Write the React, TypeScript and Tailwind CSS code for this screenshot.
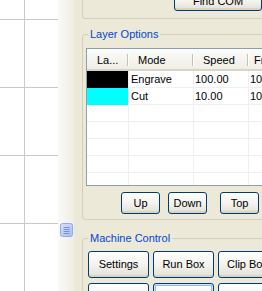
import React from "react";

const btn =
  "flex items-center justify-center shrink-0 border border-[#003c74] rounded-[3px] bg-linear-to-b from-[#ffffff] via-[#f4f3ee] to-[#e3e0d4] text-black text-[11px] leading-none shadow-[inset_0_-2px_0_#d8d3c4,inset_0_1px_0_#ffffff]";

function Row({ sw, mode, speed, f }: { sw?: string; mode?: string; speed?: string; f?: string }) {
  return (
    <div className="grid grid-cols-[42px_65px_55px_1fr] h-[17px] border-b border-[#efefef]">
      <div className="border-r border-[#efefef] pb-0">
        {sw ? <div className={`h-full w-[41px] ${sw}`} /> : null}
      </div>
      <div className="border-r border-[#efefef] pl-[2px] flex items-center">{mode}</div>
      <div className="border-r border-[#efefef] pl-[1px] flex items-center">{speed}</div>
      <div className="pl-[1px] flex items-center">{f}</div>
    </div>
  );
}

function HeadCell({ label, pl, last }: { label: string; pl: string; last?: boolean }) {
  return (
    <div className="flex items-center h-full">
      <div className={`flex-1 ${pl} pt-[2px] whitespace-nowrap overflow-hidden`}>{label}</div>
      {!last && <div className="w-[2px] h-[12px] mt-[2px] border-l border-[#c5c2b2] bg-white shrink-0" />}
    </div>
  );
}

export default function App() {
  return (
    <div className="w-[262px] h-[291px] overflow-hidden flex font-['Liberation_Sans',Arial,sans-serif] text-[11px] text-black">
      {/* canvas */}
      <div className="w-[58px] h-full bg-white shrink-0">
        <svg width="58" height="291" className="block">
          <line x1="24.5" y1="0" x2="24.5" y2="291" stroke="#c9c9c9" strokeWidth="1" />
          <line x1="0" y1="19.5" x2="58" y2="19.5" stroke="#c9c9c9" strokeWidth="1" />
          <line x1="0" y1="87.5" x2="58" y2="87.5" stroke="#c9c9c9" strokeWidth="1" />
          <line x1="0" y1="155.5" x2="58" y2="155.5" stroke="#c9c9c9" strokeWidth="1" />
          <line x1="0" y1="223.5" x2="58" y2="223.5" stroke="#c9c9c9" strokeWidth="1" />
        </svg>
      </div>
      {/* splitter */}
      <div className="w-[16px] h-full shrink-0 bg-linear-to-r from-[#f9f9f6] to-[#efede5] flex flex-col pl-[2px] pt-[223px]">
        <svg width="13" height="14" className="block">
          <defs>
            <linearGradient id="ig" x1="0" y1="0" x2="1" y2="1">
              <stop offset="0" stopColor="#d8e2fd" />
              <stop offset="1" stopColor="#a9bdf0" />
            </linearGradient>
          </defs>
          <rect x="0.5" y="0.5" width="12" height="13" rx="2" fill="url(#ig)" stroke="#93aae6" />
          <line x1="3.5" y1="4.5" x2="9.5" y2="4.5" stroke="#7590dc" />
          <line x1="3.5" y1="6.5" x2="9.5" y2="6.5" stroke="#7590dc" />
          <line x1="3.5" y1="8.5" x2="9.5" y2="8.5" stroke="#7590dc" />
          <line x1="3.5" y1="10.5" x2="9.5" y2="10.5" stroke="#7590dc" />
        </svg>
      </div>
      {/* panel */}
      <div className="flex-1 min-w-0 h-full bg-[#ece9d8] overflow-hidden pl-[8px]">
        <div className="w-[220px] flex flex-col">
          {/* top group */}
          <div className="mt-[-30px] h-[49px] border border-[#d0d0bf] rounded-[3px] flex flex-col justify-end pb-[7px]">
            <button className={`${btn} ml-[91px] w-[88px] h-[20px]`}>Find COM</button>
          </div>

          {/* Layer Options */}
          <fieldset className="mt-[9px] border border-[#d0d0bf] rounded-[3px] px-[3px] pb-[5px] min-w-0">
            <legend className="ml-[2px] px-[2px] text-[#0046d5] leading-[13px]">Layer Options</legend>
            <div className="mt-[7px] h-[138px] border border-[#8f9db0] bg-white overflow-hidden">
              <div className="grid grid-cols-[42px_65px_55px_1fr] h-[22px] bg-linear-to-b from-[#fbfbf9] to-[#efeee6] border-b-2 border-[#d9d5c6]">
                <HeadCell label="La..." pl="pl-[10px]" />
                <HeadCell label="Mode" pl="pl-[9px]" />
                <HeadCell label="Speed" pl="pl-[9px]" />
                <HeadCell label="Freq" pl="pl-[5px]" last />
              </div>
              <Row sw="bg-black" mode="Engrave" speed="100.00" f="100" />
              <Row sw="bg-[#00ffff]" mode="Cut" speed="10.00" f="100" />
              <Row />
              <Row />
              <Row />
              <Row />
              <Row />
            </div>
            <div className="mt-[6px] flex">
              <button className={`${btn} ml-[35px] w-[39px] h-[22px]`}>Up</button>
              <button className={`${btn} ml-[8px] w-[39px] h-[22px]`}>Down</button>
              <button className={`${btn} ml-[13px] w-[39px] h-[22px]`}>Top</button>
            </div>
          </fieldset>

          {/* Machine Control */}
          <fieldset className="mt-[12px] border border-[#d0d0bf] rounded-[3px] pl-[5px] pb-[5px] min-w-0">
            <legend className="px-[2px] text-[#0046d5] leading-[13px]">Machine Control</legend>
            <div className="mt-[6px] flex gap-[4px]">
              <button className={`${btn} w-[61px] h-[27px]`}>Settings</button>
              <button className={`${btn} w-[61px] h-[27px]`}>Run Box</button>
              <button className={`${btn} w-[61px] h-[27px] justify-start pl-[8px] whitespace-nowrap`}>Clip Box</button>
            </div>
            <div className="mt-[5px] flex gap-[4px]">
              <button className={`${btn} w-[61px] h-[27px]`}>Home</button>
              <button className={`${btn} w-[61px] h-[27px] shadow-[inset_0_0_0_1px_#cee7ff,inset_0_0_0_2px_#98b8ea]`}>Test</button>
              <button className={`${btn} w-[61px] h-[27px]`}>Fire</button>
            </div>
          </fieldset>
        </div>
      </div>
    </div>
  );
}
